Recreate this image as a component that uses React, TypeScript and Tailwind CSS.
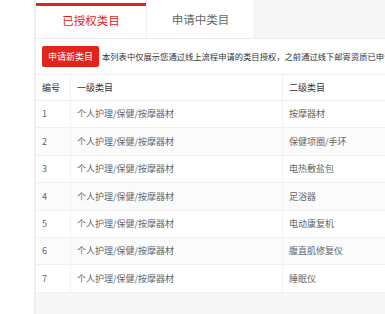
import React from "react";

const rows = [
  ["1", "个人护理/保健/按摩器材", "按摩器材"],
  ["2", "个人护理/保健/按摩器材", "保健项圈/手环"],
  ["3", "个人护理/保健/按摩器材", "电热敷盐包"],
  ["4", "个人护理/保健/按摩器材", "足浴器"],
  ["5", "个人护理/保健/按摩器材", "电动康复机"],
  ["6", "个人护理/保健/按摩器材", "腹直肌修复仪"],
  ["7", "个人护理/保健/按摩器材", "睡眠仪"],
];

export default function App() {
  return (
    <div
      className="w-[385px] h-[314px] bg-white flex overflow-hidden"
      style={{ fontFamily: '"Noto Sans CJK SC", "Noto Sans", sans-serif' }}
    >
      <div className="w-[34px] shrink-0 bg-white" />
      <div className="w-[2px] shrink-0 bg-[#efefef]" />
      <div className="w-[600px] shrink-0 flex flex-col bg-[#f7f7f7]">
        <div className="h-[39px] flex border-b border-[#ececec] bg-[#f7f7f7]">
          <div className="w-[110px] bg-white flex flex-col">
            <div className="h-[3px] bg-white" />
            <div className="h-[3px] bg-[#e1251b]" />
            <div className="flex-1 flex items-center justify-center text-[11.5px] text-[#e1251b] pb-[3px]">
              已授权类目
            </div>
          </div>
          <div className="w-[109px] bg-white border-l border-r border-[#eeeeee] flex items-center justify-center text-[11.5px] text-[#666] pt-[2px]">
            申请中类目
          </div>
        </div>
        <div className="h-[35px] bg-white flex items-center pl-[6px] gap-[3px]">
          <div className="w-[57px] h-[21px] bg-[#e1251b] rounded-[2px] text-white text-[9px] flex items-center justify-center">
            申请新类目
          </div>
          <div className="text-[8.3px] text-[#333] whitespace-nowrap">
            本列表中仅展示您通过线上流程申请的类目授权，之前通过线下邮寄资质已申请的类目可在其他页面查看
          </div>
        </div>
        <div className="bg-white text-[9px]">
          <div className="flex h-[27px] border-t border-b border-[#eeeeee] text-[#333]">
            <div className="w-[35px] flex items-center pl-[6px] border-r border-[#eeeeee]">编号</div>
            <div className="w-[212px] flex items-center pl-[6px] border-r border-[#eeeeee]">一级类目</div>
            <div className="flex-1 flex items-center pl-[6px]">二级类目</div>
          </div>
          {rows.map((r, i) => (
            <div
              key={i}
              className={`flex h-[27.4px] border-b border-[#f0f0f0] text-[#666] ${i % 2 === 1 ? "bg-[#fbfbfb]" : "bg-white"}`}
            >
              <div className="w-[35px] flex items-center pl-[6px] border-r border-[#f2f2f2]">{r[0]}</div>
              <div className="w-[212px] flex items-center pl-[6px] border-r border-[#f2f2f2]">{r[1]}</div>
              <div className="flex-1 flex items-center pl-[6px]">{r[2]}</div>
            </div>
          ))}
        </div>
      </div>
    </div>
  );
}
